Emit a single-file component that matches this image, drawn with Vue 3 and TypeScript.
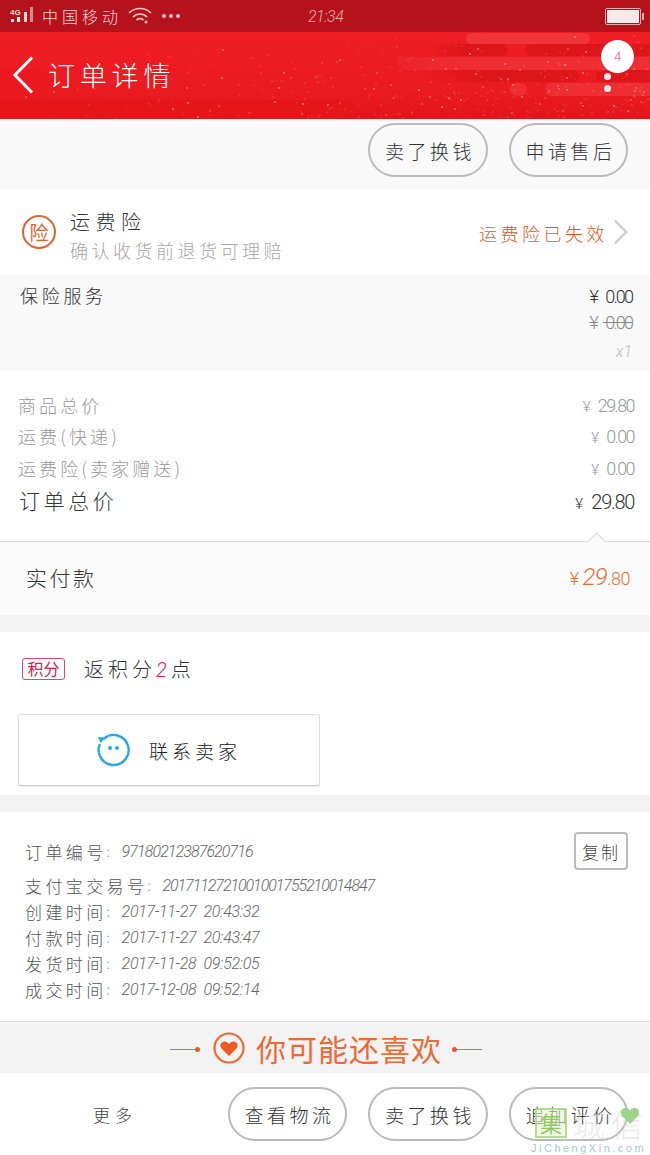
<script setup lang="ts">
const buttonsTop = ['卖了换钱', '申请售后'];
const buttonsBottom = ['查看物流', '卖了换钱', '追加评价'];

const priceRows = [
  { label: '商品总价', value: '29.80' },
  { label: '运费(快递)', value: '0.00' },
  { label: '运费险(卖家赠送)', value: '0.00' },
];

const timeRows = [
  { label: '支付宝交易号', value: '2017112721001001755210014847', date: false },
  { label: '创建时间', value: '2017-11-27  20:43:32', date: true },
  { label: '付款时间', value: '2017-11-27  20:43:47', date: true },
  { label: '发货时间', value: '2017-11-28  09:52:05', date: true },
  { label: '成交时间', value: '2017-12-08  09:52:14', date: true },
];

// clouds behind the header
const clouds = [
  { x: 466, y: 1, w: 124, h: 11, fill: '#f0343a' },
  { x: 430, y: 12, w: 78, h: 12, fill: 'url(#fadeDark)' },
  { x: 525, y: 12, w: 140, h: 12, fill: '#de161c' },
  { x: 397, y: 25, w: 270, h: 13, fill: 'url(#fadeLight)' },
  { x: 420, y: 38, w: 159, h: 12, fill: 'url(#fadeDark)' },
  { x: 596, y: 38, w: 70, h: 12, fill: '#de161c' },
  { x: 510, y: 51, w: 17, h: 13, fill: '#ee2e33' },
  { x: 545, y: 51, w: 120, h: 13, fill: '#ee2e33' },
  { x: -20, y: 38, w: 70, h: 30, fill: '#eb191f' },
  { x: -20, y: 68, w: 375, h: 22, fill: '#e51519' },
];

// speckled gold dust, denser to the lower right
let seed = 77;
const next = () => {
  seed = (seed * 16807) % 2147483647;
  return seed / 2147483647;
};
const dust = Array.from({ length: 420 }, () => ({
  x: Math.round(Math.sqrt(next()) * 650),
  y: Math.round(Math.sqrt(next()) * 86),
  r: next() > 0.8 ? 1 : 0.6,
  o: 0.25 + next() * 0.45,
}));
</script>

<template>
  <div class="page">
    <div class="status">
      <div class="status-left">
        <svg class="signal" width="26" height="20" viewBox="0 0 26 20">
          <text x="0" y="8" font-size="8" font-weight="700" fill="#f4d5d7" font-family="Liberation Sans, sans-serif">4G</text>
          <rect x="1" y="12" width="3" height="3" fill="#fff" />
          <rect x="7" y="10" width="3" height="5" fill="#fff" />
          <rect x="14" y="5" width="3" height="10" fill="#f4d5d7" />
          <rect x="20" y="0" width="3" height="15" fill="#d88" />
        </svg>
        <span class="carrier">中国移动</span>
        <svg class="wifi" width="24" height="18" viewBox="0 0 24 18" fill="none" stroke="#eec4c6" stroke-width="1.6">
          <path d="M1 6C7 0 17 0 23 6" />
          <path d="M5 10C9 6 15 6 19 10" />
          <path d="M8.500 13C10.500 11.500 13.500 11.500 15.500 13" />
          <circle cx="18" cy="15" r="1.500" fill="#eec4c6" stroke="none" />
        </svg>
        <span class="dots"><i></i><i></i><i></i></span>
      </div>
      <span class="clock">21:34</span>
      <div class="battery"><i></i></div>
    </div>

    <header class="nav">
      <svg class="nav-art" width="650" height="87" viewBox="0 0 650 87">
        <defs>
          <linearGradient id="fadeDark" x1="0" x2="1" y1="0" y2="0">
            <stop offset="0" stop-color="#de161c" stop-opacity="0" />
            <stop offset="0.4" stop-color="#de161c" />
          </linearGradient>
          <linearGradient id="fadeLight" x1="0" x2="1" y1="0" y2="0">
            <stop offset="0" stop-color="#ee2e33" stop-opacity="0.4" />
            <stop offset="0.3" stop-color="#ee2e33" />
          </linearGradient>
        </defs>
        <rect v-for="(c, i) in clouds" :key="i" :x="c.x" :y="c.y" :width="c.w" :height="c.h" :rx="c.h / 2" :fill="c.fill" />
        <circle v-for="(d, i) in dust" :key="'d' + i" :cx="d.x" :cy="d.y" :r="d.r" fill="#ffb9a8" :opacity="d.o" />
      </svg>
      <svg class="back" width="22" height="38" viewBox="0 0 22 38" fill="none" stroke="#fff" stroke-width="3">
        <path d="M20 1.500L3 19L20 36.500" />
      </svg>
      <span class="nav-title">订单详情</span>
      <div class="nav-more">
        <span class="badge">4</span>
        <i></i>
        <i></i>
      </div>
    </header>

    <section class="actions">
      <button v-for="b in buttonsTop" :key="b" class="pill">{{ b }}</button>
    </section>

    <section class="insure">
      <span class="insure-icon">险</span>
      <div class="insure-text">
        <div class="insure-name">运费险</div>
        <div class="insure-sub">确认收货前退货可理赔</div>
      </div>
      <span class="insure-state">运费险已失效</span>
      <svg class="chev" width="15" height="26" viewBox="0 0 15 26" fill="none" stroke="#cfcfcf" stroke-width="2.500">
        <path d="M2 1.500L13 13L2 24.500" />
      </svg>
    </section>

    <section class="service">
      <div class="service-name">保险服务</div>
      <div class="service-prices">
        <div class="now"><em>¥</em> 0.00</div>
        <div class="was"><em>¥</em> 0.00</div>
        <div class="qty">x1</div>
      </div>
    </section>

    <section class="totals">
      <div v-for="r in priceRows" :key="r.label" class="row">
        <span class="row-label">{{ r.label }}</span>
        <span class="row-value"><em>¥</em> {{ r.value }}</span>
      </div>
      <div class="row row-total">
        <span class="row-label">订单总价</span>
        <span class="row-value"><em>¥</em> 29.80</span>
      </div>
    </section>

    <section class="paid">
      <span class="notch"></span>
      <span class="paid-label">实付款</span>
      <span class="paid-value"><em>¥</em> <b>29</b>.80</span>
    </section>

    <div class="band"></div>

    <section class="points">
      <div class="points-line">
        <span class="points-tag">积分</span>
        <span class="points-text">返积分<b>2</b>点</span>
      </div>
      <button class="contact">
        <svg width="36" height="36" viewBox="0 0 36 36" fill="none">
          <path d="M9 6.500A15 15 0 1 1 4.500 13" stroke="#27a8e2" stroke-width="2.400" stroke-linecap="round" />
          <path d="M3 5L11 5.500L5.500 11Z" fill="#27a8e2" />
          <circle cx="15" cy="16" r="2" fill="#27a8e2" />
          <circle cx="22" cy="16" r="2" fill="#27a8e2" />
        </svg>
        <span>联系卖家</span>
      </button>
    </section>

    <div class="band"></div>

    <section class="info">
      <div class="info-top">
        <div class="info-line">
          <span class="info-label">订单编号</span><span class="info-colon">:</span>
          <span class="info-num order">97180212387620716</span>
        </div>
        <button class="copy">复制</button>
      </div>
      <div class="info-list">
        <div v-for="t in timeRows" :key="t.label" class="info-line">
          <span class="info-label">{{ t.label }}</span><span class="info-colon">:</span>
          <span class="info-num" :class="{ date: t.date }">{{ t.value }}</span>
        </div>
      </div>
    </section>

    <section class="like">
      <span class="like-rule left"></span>
      <svg width="34" height="34" viewBox="0 0 34 34" fill="none">
        <circle cx="17" cy="17" r="14.500" stroke="#ee6a35" stroke-width="2.200" />
        <path d="M17 25L9.500 17.500C7 14.500 9 10.500 12.500 10.500C14.500 10.500 16 11.500 17 13C18 11.500 19.500 10.500 21.500 10.500C25 10.500 27 14.500 24.500 17.500Z" fill="#ee5a24" />
      </svg>
      <span class="like-text">你可能还喜欢</span>
      <span class="like-rule right"></span>
    </section>

    <footer class="bottom">
      <span class="more">更多</span>
      <button v-for="b in buttonsBottom" :key="b" class="pill">{{ b }}</button>
    </footer>

    <div class="watermark">
      <div class="wm-top">
        <span class="wm-box">集</span>
        <span class="wm-name">城信</span>
        <svg class="wm-heart" width="20" height="18" viewBox="0 0 20 18">
          <path d="M10 17L2 9C-1 5 2 1 6 1C8 1 9 2 10 4C11 2 12 1 14 1C18 1 21 5 18 9Z" fill="#9fd28a" />
        </svg>
      </div>
      <div class="wm-url">JiChengXin.com</div>
    </div>
  </div>
</template>

<style>
html,
body {
  margin: 0;
  background: #fff;
}
</style>

<style scoped>
.page {
  position: relative;
  width: 650px;
  height: 1155px;
  overflow: hidden;
  background: #fff;
  color: #333;
  font-family: "Noto Sans CJK SC", "Liberation Sans", sans-serif;
  font-weight: 300;
}

em {
  font-style: normal;
}

button {
  font-family: inherit;
  font-weight: 300;
  padding: 0;
  background: transparent;
}

.status {
  position: relative;
  height: 32px;
  background: #b5121b;
  display: flex;
  align-items: center;
  justify-content: space-between;
  padding: 0 10px;
  color: #f3d2d4;
}

.status-left {
  display: flex;
  align-items: center;
}

.signal {
  margin-right: 6px;
  margin-top: 2px;
}

.carrier {
  font-size: 16px;
  letter-spacing: 4px;
  width: 82px;
  white-space: nowrap;
}

.wifi {
  margin-left: 4px;
}

.dots {
  display: flex;
  gap: 3px;
  margin-left: 10px;
}

.dots i {
  width: 4px;
  height: 4px;
  border-radius: 50%;
  background: #eec4c6;
}

.clock {
  position: absolute;
  left: 308px;
  font-family: Roboto, sans-serif;
  font-size: 16px;
  font-style: italic;
  font-weight: 300;
  color: #e8a9ac;
  letter-spacing: -0.5px;
}

.battery {
  width: 32px;
  height: 13px;
  border: 1px solid #e9a7aa;
  padding: 1px;
  border-radius: 2px;
  position: relative;
  margin-right: -1px;
}

.battery i {
  display: block;
  height: 100%;
  background: #f8e8e9;
}

.battery::after {
  content: "";
  position: absolute;
  right: -4px;
  top: 4px;
  width: 2px;
  height: 7px;
  background: #e9a7aa;
}

.nav {
  position: relative;
  height: 87px;
  overflow: hidden;
  background: linear-gradient(180deg, #ef1e24 0%, #e91a20 70%, #e3151b 100%);
  display: flex;
  align-items: center;
  color: #fff;
}

.nav-art {
  position: absolute;
  left: 0;
  top: 0;
}

.back {
  position: relative;
  margin-left: 12px;
  margin-top: -1px;
}

.nav-title {
  position: relative;
  margin-left: 14px;
  margin-top: -2px;
  font-size: 27px;
  letter-spacing: 4.800px;
  font-weight: 300;
  white-space: nowrap;
}

.nav-more {
  position: absolute;
  left: 601px;
  top: 8px;
  width: 33px;
  display: flex;
  flex-direction: column;
  align-items: center;
}

.nav-more i {
  width: 7px;
  height: 7px;
  border-radius: 50%;
  background: #fbe7e8;
  margin-top: 5px;
  margin-right: 21px;
}

.nav-more i:first-of-type {
  margin-top: 0;
}

.badge {
  width: 33px;
  height: 33px;
  border-radius: 50%;
  background: #fff;
  color: #d9505a;
  font-family: Roboto, sans-serif;
  font-size: 13px;
  line-height: 33px;
  text-align: center;
}

.actions {
  height: 71px;
  background: #f9f9f9;
  display: flex;
  justify-content: flex-end;
  align-items: center;
  gap: 21px;
  padding: 0 22px 9px 0;
  box-sizing: border-box;
}

.actions .pill:last-child {
  width: 119px;
}

.pill {
  width: 120px;
  height: 54px;
  box-sizing: border-box;
  border: 2px solid #bbb;
  border-radius: 27px;
  padding-left: 4px;
  color: #333;
  font-size: 19px;
  letter-spacing: 3.500px;
  white-space: nowrap;
}

.insure {
  height: 84px;
  display: flex;
  align-items: center;
  padding: 0 22px;
  background: #fff;
}

.insure-icon {
  width: 34px;
  height: 34px;
  box-sizing: border-box;
  border: 2px solid #e0642f;
  border-radius: 50%;
  color: #e0642f;
  font-size: 19px;
  font-weight: 400;
  line-height: 29px;
  text-align: center;
  flex: none;
}

.insure-text {
  margin: 7px 0 0 14px;
  flex: 1;
}

.insure-name {
  font-size: 20px;
  letter-spacing: 5.500px;
  line-height: 28px;
  color: #333;
}

.insure-sub {
  font-size: 18px;
  letter-spacing: 3.500px;
  line-height: 28px;
  color: #a5a5a5;
}

.insure-state {
  font-size: 18px;
  letter-spacing: 3.500px;
  color: #e8531e;
  white-space: nowrap;
  margin-top: 2px;
}

.chev {
  margin-left: 5px;
  flex: none;
}

.service {
  height: 97px;
  background: #f9f9f9;
  display: flex;
  justify-content: space-between;
  padding: 8px 18px 0 20px;
  box-sizing: border-box;
}

.service-name {
  font-size: 18px;
  letter-spacing: 3.700px;
  line-height: 26px;
}

.service-prices {
  text-align: right;
  font-family: Roboto, sans-serif;
  font-size: 18px;
  letter-spacing: -1.900px;
  line-height: 27px;
  margin-top: 1px;
}

.service-prices em {
  margin-right: 6px;
}

.now {
  color: #333;
}

.was {
  color: #888;
  text-decoration: line-through;
  margin-top: -1px;
}

.qty {
  color: #bbb;
  font-style: italic;
  font-size: 16px;
  letter-spacing: 0;
  line-height: 32px;
}

.totals {
  height: 170px;
  padding: 18px 16px 0 18px;
  box-sizing: border-box;
  background: #fff;
  color: #999;
}

.row {
  display: flex;
  justify-content: space-between;
  align-items: center;
  height: 31.500px;
}

.row-label {
  font-size: 18px;
  letter-spacing: 3.100px;
  white-space: nowrap;
}

.row-value {
  font-family: Roboto, sans-serif;
  font-size: 18px;
  letter-spacing: -1.600px;
  margin-top: 1px;
}

.row-value em {
  margin-right: 6px;
  font-size: 15px;
}

.row-total {
  color: #333;
  height: 34px;
}

.row-total .row-label {
  font-size: 21px;
  letter-spacing: 3.600px;
  margin: -2px 0 0 1px;
}

.row-total .row-value {
  font-size: 20px;
  letter-spacing: -1.300px;
  margin-top: 2px;
}

.paid {
  position: relative;
  height: 74px;
  border-top: 1px solid #ddd;
  box-sizing: border-box;
  background: #fbfbfb;
  display: flex;
  align-items: center;
  justify-content: space-between;
  padding: 0 20px 4px 26px;
}

.notch {
  position: absolute;
  left: 590px;
  top: -7px;
  width: 12px;
  height: 12px;
  background: #fbfbfb;
  border-left: 1px solid #ddd;
  border-top: 1px solid #ddd;
  transform: rotate(45deg);
}

.paid-label {
  font-size: 21px;
  letter-spacing: 2.500px;
}

.paid-value {
  font-family: Roboto, sans-serif;
  font-size: 18px;
  color: #e9703a;
  letter-spacing: -0.5px;
}

.paid-value b {
  font-size: 24px;
  font-weight: 300;
  font-style: italic;
}

.band {
  height: 17px;
  background: #f3f3f3;
}

.points {
  height: 163px;
}

.points-line {
  display: flex;
  align-items: center;
  height: 22px;
  padding: 26px 0 0 22px;
}

.points-tag {
  width: 43px;
  height: 22px;
  box-sizing: border-box;
  border: 1px solid #d94a66;
  border-radius: 3px;
  color: #d6204b;
  font-size: 16px;
  font-weight: 400;
  line-height: 19px;
  text-align: center;
}

.points-text {
  margin-left: 19px;
  font-size: 20px;
  letter-spacing: 4px;
  color: #333;
  line-height: 22px;
}

.points-text b {
  color: #e2264d;
  font-weight: 300;
  font-style: italic;
  font-family: Roboto, sans-serif;
}

.contact {
  display: flex;
  align-items: center;
  width: 302px;
  height: 72px;
  margin: 34px 0 0 18px;
  box-sizing: border-box;
  border: 1px solid #ddd;
  border-bottom-color: #ccc;
  border-radius: 3px;
  background: #fff;
  box-shadow: 0 1px 1px rgba(0, 0, 0, 0.08);
  padding-left: 76px;
  color: #222;
  font-size: 19px;
  letter-spacing: 4px;
}

.contact span {
  margin-left: 18px;
  white-space: nowrap;
}

.info {
  height: 209px;
  border-bottom: 1px solid #ddd;
}

.info-top {
  display: flex;
  justify-content: space-between;
  align-items: center;
  padding: 20px 22px 0 25px;
}

.info-line {
  display: flex;
  align-items: center;
  height: 26px;
  color: #555;
  white-space: pre;
}

.info-label {
  font-size: 17px;
  letter-spacing: 3.400px;
}

.info-colon {
  color: #999;
  font-size: 14px;
  width: 15px;
}

.info-num {
  font-family: Roboto, sans-serif;
  font-size: 16px;
  font-style: italic;
  letter-spacing: -1.050px;
  color: #666;
}

.info-num.order {
  letter-spacing: -0.900px;
}

.info-num.date {
  letter-spacing: -0.300px;
}

.copy {
  width: 54px;
  height: 38px;
  box-sizing: border-box;
  border: 2px solid #bbb;
  border-radius: 4px;
  color: #444;
  font-size: 17px;
  letter-spacing: 2px;
}

.info-list {
  padding: 2px 0 0 25px;
}

.like {
  position: relative;
  height: 51px;
  background: #f3f3f3;
  display: flex;
  align-items: center;
  padding-left: 212px;
  color: #ee6a35;
}

.like svg {
  flex: none;
}

.like-text {
  margin-left: 10px;
  font-size: 30px;
  font-weight: 400;
  letter-spacing: 1px;
  white-space: nowrap;
}

.like-rule {
  position: absolute;
  top: 27px;
  height: 1px;
  width: 30px;
  background: #ee6a35;
}

.like-rule.left {
  left: 170px;
}

.like-rule.right {
  left: 452px;
}

.like-rule::after {
  content: "";
  position: absolute;
  top: -2px;
  width: 5px;
  height: 5px;
  border-radius: 50%;
  background: #ee5a24;
}

.like-rule.left::after {
  right: 0;
}

.like-rule.right::after {
  left: 0;
}

.bottom {
  height: 82px;
  display: flex;
  align-items: center;
  background: #fff;
}

.more {
  font-size: 17px;
  letter-spacing: 5px;
  margin-left: 93px;
  width: 135px;
  flex: none;
  color: #444;
}

.bottom .pill {
  margin-right: 21px;
  width: 119px;
  flex: none;
}

.bottom .pill:nth-of-type(2) {
  width: 120px;
}

.watermark {
  position: absolute;
  left: 531px;
  top: 1107px;
  width: 119px;
  pointer-events: none;
}

.wm-top {
  position: relative;
  display: flex;
  align-items: center;
  height: 31px;
  padding-left: 4px;
}

.wm-box {
  width: 32px;
  height: 30px;
  box-sizing: border-box;
  border: 2px solid rgba(168, 214, 120, 0.8);
  background: rgba(232, 245, 214, 0.6);
  color: #8fcb62;
  font-size: 22px;
  font-weight: 400;
  line-height: 25px;
  text-align: center;
}

.wm-name {
  margin-left: 6px;
  font-size: 32px;
  line-height: 30px;
  letter-spacing: 6px;
  color: rgba(215, 215, 215, 0.55);
  white-space: nowrap;
}

.wm-heart {
  position: absolute;
  left: 89px;
  top: 0;
}

.wm-url {
  margin-top: 4px;
  font-family: "Liberation Sans", sans-serif;
  font-size: 11px;
  line-height: 13px;
  letter-spacing: 2.500px;
  color: #a5c8cc;
  white-space: nowrap;
}
</style>
